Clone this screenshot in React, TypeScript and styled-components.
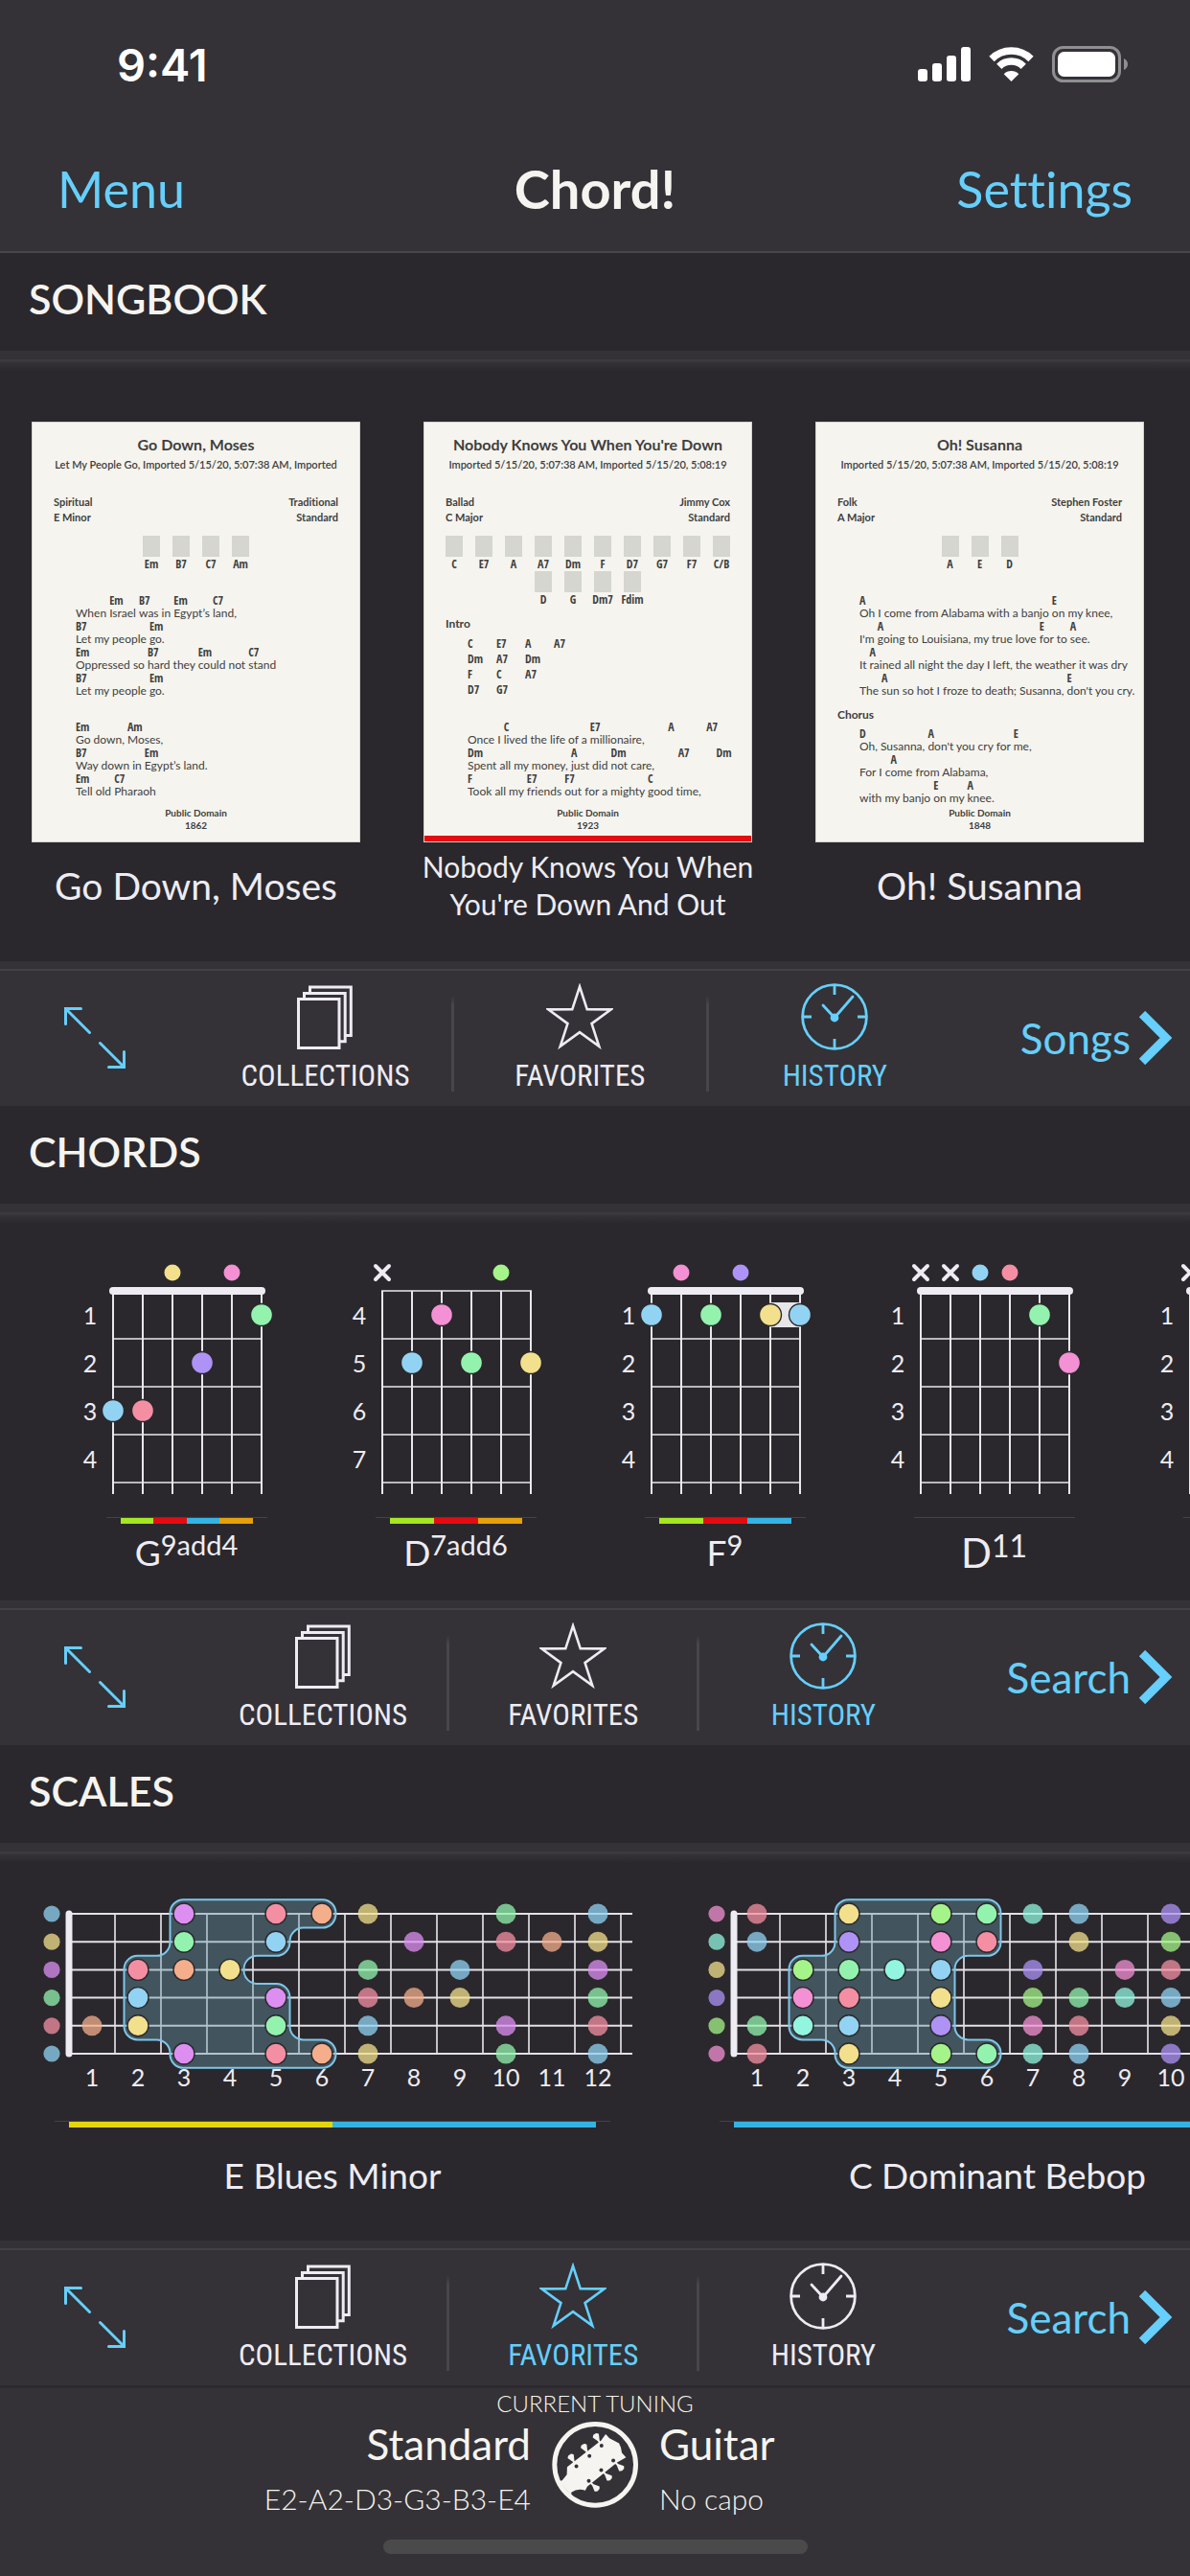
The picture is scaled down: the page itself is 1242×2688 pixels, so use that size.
import React from 'react';
import styled, { createGlobalStyle, css } from 'styled-components';

const color = {
  page: '#2a282c',
  bar: '#343236',
  band: '#353237',
  hairline: '#434146',
  divider: '#48464b',
  accent: '#66cffb',
  text: '#f6f4f0',
  soft: '#eeecf3',
  ink: '#40403e',
  paper: '#f5f4ee',
};

const note = {
  blue: '#92d3f3',
  yellow: '#f3e08d',
  magenta: '#dd8ff1',
  green: '#93f3ae',
  red: '#f48fa3',
  orange: '#f4ae8c',
  violet: '#ae92f5',
  pink: '#f490d4',
  lime: '#a5f48a',
  teal: '#92f5df',
} as const;
type NoteName = keyof typeof note;

const tag = { lime: '#a6e622', red: '#e50b10', blue: '#35b3e2', amber: '#e5a00b', yellow: '#e5d50c' };

const condensed = '"Roboto Condensed", Roboto, sans-serif';
const condensedBold = '"Open Sans Condensed", "Open Sans", sans-serif';

const GlobalStyle = createGlobalStyle`
  *, *::before, *::after { box-sizing: border-box; }
  body {
    margin: 0;
    background: ${color.bar};
    color: ${color.soft};
    font-family: Lato, sans-serif;
    font-variant-ligatures: no-common-ligatures;
    -webkit-font-smoothing: antialiased;
  }
  h1, h2, p, ul { margin: 0; padding: 0; }
  button { font: inherit; color: inherit; background: none; border: 0; padding: 0; cursor: pointer; }
  svg { display: block; }
`;

/* ---------- Page frame ---------- */

const Page = styled.div`
  display: flex;
  flex-direction: column;
  min-height: 100vh;
  overflow-x: hidden;
`;

const Header = styled.header`
  background: ${color.bar};
  border-bottom: 2px solid ${color.divider};
`;

const StatusBar = styled.div`
  display: flex;
  align-items: center;
  justify-content: space-between;
  height: 134px;
  padding: 0 65px 0 122px;
`;

const Clock = styled.time`
  font: 600 47px/1 Inter, sans-serif;
  color: #fff;
`;

const StatusIcons = styled.div`
  display: flex;
  align-items: center;
  gap: 19px;
`;

const NavBar = styled.nav`
  display: grid;
  grid-template-columns: 1fr auto 1fr;
  align-items: center;
  height: 128px;
  padding: 0 60px 2px;
`;

const NavButton = styled.button<{ $end?: boolean }>`
  justify-self: ${(p) => (p.$end ? 'end' : 'start')};
  font-size: 52px;
  line-height: 60px;
  color: ${color.accent};
`;

const AppTitle = styled.h1`
  font-size: 56px;
  line-height: 64px;
  font-weight: 700;
  color: ${color.text};
`;

/* ---------- Sections ---------- */

const Section = styled.section`
  background: ${color.page};
`;

const SectionTitle = styled.h2`
  height: 102px;
  padding-left: 30px;
  font-size: 43px;
  line-height: 96px;
  font-weight: 600;
  color: ${color.text};
`;

const TitleRule = styled.div`
  height: 23px;
  border-top: 9px solid ${color.band};
  background: linear-gradient(#3c3a3f 2px, ${color.bar} 3px, ${color.page} 12px);
`;

const Rail = styled.ul`
  display: flex;
  list-style: none;
  overflow: hidden;
`;

const SongRail = styled(Rail)`
  gap: 66px;
  padding: 51px 33px 34px;
`;

const ChordRail = styled(Rail)`
  padding: 24px 0 20px 54px;
`;

const ScaleRail = styled(Rail)`
  padding: 28px 0 18px;
`;

/* ---------- Song sheets ---------- */

const SongItem = styled.li`
  flex: 0 0 343px;
  min-width: 0;
`;

const Sheet = styled.article<{ $flagged?: boolean }>`
  display: flex;
  flex-direction: column;
  height: 439px;
  padding: 11px 22px 10px;
  border: 1px solid #d5d3cf;
  background: ${color.paper};
  color: ${color.ink};
  white-space: pre;
  ${(p) => p.$flagged && css`box-shadow: inset 0 -6px ${tag.red};`}
`;

const SheetTitle = styled.p`
  text-align: center;
  font-size: 16px;
  line-height: 23px;
  font-weight: 700;
`;

const SheetTags = styled.p`
  display: flex;
  justify-content: center;
  font-size: 11px;
  line-height: 20px;
  font-weight: 600;
  margin-bottom: 21px;
`;

const SheetMeta = styled.div`
  display: flex;
  justify-content: space-between;
  font-size: 11px;
  line-height: 16px;
  font-weight: 700;
`;

const ChipRows = styled.div`
  margin-top: 11px;
`;

const ChipRow = styled.div`
  display: flex;
  justify-content: center;
  gap: 13px;
`;

const Chip = styled.div`
  display: flex;
  flex-direction: column;
  align-items: center;
  width: 18px;
  font: 700 12px/15px ${condensedBold};

  &::before {
    content: '';
    width: 18px;
    height: 22px;
    background: #d6d6d1;
  }
`;

const Verse = styled.div<{ $tight?: boolean }>`
  margin-top: ${(p) => (p.$tight ? 0 : 24)}px;
  padding-left: 23px;
`;

const PartName = styled.p`
  margin: 10px 0 5px;
  font-size: 12px;
  line-height: 16px;
  font-weight: 700;
`;

const LyricLine = styled.div`
  display: flex;
`;

const Syllables = styled.span`
  display: flex;
  flex-direction: column;
  flex-shrink: 0;
  font-size: 12px;
  line-height: 14px;
`;

const LyricChord = styled.b`
  width: 0;
  height: 13px;
  font: 700 12px/13px ${condensedBold};
`;

const ChordGrid = styled.div`
  display: grid;
  grid-template-columns: repeat(4, 30px);
  padding-left: 23px;
  font: 700 12px/16px ${condensedBold};
`;

const GridCell = styled.span<{ $first: boolean }>`
  ${(p) => p.$first && css`grid-column-start: 1;`}
`;

const SheetFooter = styled.p`
  margin-top: auto;
  text-align: center;
  font-size: 10px;
  line-height: 13px;
  font-weight: 700;
`;

const SongName = styled.p<{ $small?: boolean }>`
  display: flex;
  align-items: center;
  justify-content: center;
  height: 90px;
  margin: 0 -10px;
  text-align: center;
  white-space: pre-line;
  font-size: ${(p) => (p.$small ? 30 : 39)}px;
  line-height: 39px;
`;

/* ---------- Chord and scale diagrams ---------- */

const ChordItem = styled.li`
  display: flex;
  flex-direction: column;
  align-items: center;
  flex: 0 0 281px;
`;

const ScaleItem = styled(ChordItem)`
  flex-basis: 694px;
`;

const TagTrack = styled.div<{ $wide?: boolean }>`
  display: flex;
  height: 7px;
  width: ${(p) => (p.$wide ? 580 : 168)}px;
  padding: 0 15px;
  border-top: 1px solid #444247;
`;

const TagBar = styled.span<{ $tint: string }>`
  flex: 1;
  background: ${(p) => p.$tint};
`;

const ChordName = styled.p<{ $large?: boolean }>`
  font-size: ${(p) => (p.$large ? 42 : 37)}px;
  line-height: 60px;

  sup {
    font-size: ${(p) => (p.$large ? 32 : 29)}px;
    line-height: 0;
    vertical-align: 11px;
  }
`;

const ScaleName = styled.p`
  font-size: 37px;
  line-height: 100px;
`;

const DiagramText = styled.text`
  fill: ${color.soft};
  font: 25px Lato, sans-serif;
  text-anchor: middle;
`;

/* ---------- Toolbar ---------- */

const Toolbar = styled.div`
  display: flex;
  height: 151px;
  border-top: 8px solid ${color.band};
  background: linear-gradient(${color.hairline} 2px, #343237 2px);
  color: ${color.soft};
`;

const ExpandButton = styled.button`
  flex: 0 0 208px;
  padding-left: 67px;
  color: ${color.accent};
`;

const Tab = styled.button<{ $active?: boolean }>`
  flex: 1;
  display: flex;
  flex-direction: column;
  align-items: center;
  gap: 6px;
  padding-top: 15px;
  font: 31px/42px ${condensed};
  color: ${(p) => (p.$active ? color.accent : color.soft)};
`;

const TabDivider = styled.span`
  align-self: center;
  flex: 0 0 3px;
  height: 100px;
  margin-top: 12px;
  background: linear-gradient(transparent, ${color.divider} 10%);
`;

const MoreButton = styled.button`
  display: flex;
  align-items: center;
  gap: 8px;
  padding: 0 18px 0 62px;
  font-size: 44px;
  line-height: 50px;
  color: ${color.accent};
`;

/* ---------- Tuning footer ---------- */

const Footer = styled.footer`
  flex: 1;
  display: flex;
  flex-direction: column;
  border-top: 3px solid #2b292d;
  background: ${color.bar};
  color: ${color.text};
`;

const FooterLabel = styled.p`
  text-align: center;
  font-size: 24px;
  line-height: 31px;
  font-weight: 300;
`;

const Tuning = styled.button`
  display: grid;
  grid-template-columns: 1fr 90px 1fr;
  column-gap: 22px;
  align-items: start;
  margin-top: 4px;
  text-align: left;
`;

const TuningText = styled.span<{ $end?: boolean }>`
  display: flex;
  flex-direction: column;
  gap: 16px;
  text-align: ${(p) => (p.$end ? 'right' : 'left')};
`;

const TuningMain = styled.span`
  font-size: 44px;
  line-height: 46px;
`;

const TuningSub = styled.span`
  font-size: 30px;
  line-height: 36px;
  font-weight: 300;
`;

const HomeIndicator = styled.div`
  align-self: center;
  width: 443px;
  height: 15px;
  margin: 25px 0 24px;
  border-radius: 8px;
  background: #4a4a4a;
`;

/* ---------- Icons ---------- */

const SignalIcon = () => (
  <svg width="55" height="36" viewBox="0 0 55 36" fill="#fff" aria-hidden="true">
    <rect x="0" y="23" width="10" height="13" rx="3" />
    <rect x="15" y="17" width="10" height="19" rx="3" />
    <rect x="30" y="9" width="10" height="27" rx="3" />
    <rect x="45" y="0" width="10" height="36" rx="3" />
  </svg>
);

const WifiIcon = () => (
  <svg width="47" height="36" viewBox="0 0 47 36" aria-hidden="true">
    <g fill="none" stroke="#fff" strokeWidth="7.5">
      <path d="M3 12.5A29 29 0 0 1 44 12.5" />
      <path d="M10.8 20.3A18 18 0 0 1 36.2 20.3" />
    </g>
    <path d="M23.5 36L15.7 28.2A11 11 0 0 1 31.3 28.2Z" fill="#fff" />
  </svg>
);

const BatteryIcon = () => (
  <svg width="79" height="38" viewBox="0 0 79 38" aria-hidden="true">
    <rect x="1.5" y="1.5" width="69" height="35" rx="10" fill="none" stroke="#8f8e91" strokeWidth="3" />
    <rect x="6" y="6" width="60" height="26" rx="6.5" fill="#fff" />
    <path d="M75 13Q79 15 79 19T75 25Z" fill="#8f8e91" />
  </svg>
);

const ExpandIcon = () => (
  <svg width="64" height="64" viewBox="0 0 64 64" fill="none" stroke="currentColor" strokeWidth="3" strokeLinecap="round" aria-hidden="true">
    <path d="M1.5 17.5V1.5H17.5M1.5 1.5L26.5 26.5M37.5 37.5L62.5 62.5M62.5 46.5V62.5H46.5" />
  </svg>
);

const CollectionsIcon = () => (
  <svg width="70" height="70" viewBox="0 0 70 70" fill="none" stroke="currentColor" strokeWidth="3" aria-hidden="true">
    <path d="M7.5 16.5H50V67.5H7.5Z" />
    <path d="M13.5 16V10.5H56.2V60.7H50" />
    <path d="M19.5 10V4H62.3V54.5H56" />
  </svg>
);

const starPoints = Array.from({ length: 10 }, (_, i) => {
  const r = i % 2 ? 13.2 : 34.5;
  const a = (i * Math.PI) / 5;
  return `${(35 + r * Math.sin(a)).toFixed(2)},${(38 - r * Math.cos(a)).toFixed(2)}`;
}).join(' ');

const StarIcon = () => (
  <svg width="70" height="70" viewBox="0 0 70 70" fill="none" stroke="currentColor" strokeWidth="2.6" aria-hidden="true">
    <polygon points={starPoints} />
  </svg>
);

const HistoryIcon = () => (
  <svg width="70" height="70" viewBox="0 0 70 70" fill="none" stroke="currentColor" strokeWidth="2.8" aria-hidden="true">
    <circle cx="35" cy="35" r="33.4" />
    <path d="M35 2V12M35 58V68M2 35H11M59 35H68" />
    <path d="M35 36L54 14M35 36L23 23" strokeLinecap="round" />
    <circle cx="35" cy="36" r="4.4" fill="currentColor" stroke="none" />
  </svg>
);

const ChevronIcon = () => (
  <svg width="36" height="56" viewBox="0 0 36 56" fill="none" stroke="currentColor" strokeWidth="9" aria-hidden="true">
    <path d="M4 3L29 28L4 53" />
  </svg>
);

const pegs = [
  { x: 184, y: 278, turn: -30 },
  { x: 225, y: 246, turn: -30 },
  { x: 263, y: 213, turn: -30 },
  { x: 223, y: 324, turn: 134 },
  { x: 262, y: 290, turn: 134 },
  { x: 300, y: 260, turn: 134 },
];

const GuitarIcon = () => (
  <svg width="90" height="90" viewBox="107 138 271 271" aria-hidden="true">
    <g fill={color.text}>
      <path d="M130 326L140 322L154 304L155 280L262 197L276 177L288 190L318 206Q326 220 327 236L340 250L312 266L218 342L212 354Q188 346 168 360L168 370Z" />
      {pegs.map((p) => (
        <path key={`${p.x}`} transform={`translate(${p.x} ${p.y}) rotate(${p.turn})`} d="M-3 0L-3 -18L-11 -36Q-6 -44 0 -42Q6 -44 11 -36L3 -18L3 0Z" />
      ))}
    </g>
    {pegs.map((p) => (
      <circle key={`${p.x}`} cx={p.x} cy={p.y} r="6" fill={color.bar} />
    ))}
    <circle cx="243" cy="273" r="127.5" fill="none" stroke={color.text} strokeWidth="15" />
  </svg>
);

/* ---------- Data ---------- */

type Lyric = [chord: string, words: string][];
type Part =
  | { kind: 'verse'; name?: string; lines: Lyric[] }
  | { kind: 'grid'; name: string; rows: string[][] };

interface Song {
  name: string;
  title: string;
  tags: string;
  meta: [string, string, string, string];
  chips: string[][];
  parts: Part[];
  year: string;
  flagged?: boolean;
}

/* Chords that fall after the last word are spaced out with hard spaces. */
const rest = '\u00a0'.repeat(13);
const pause = '\u00a0'.repeat(8);

const songs: Song[] = [
  {
    name: 'Go Down, Moses',
    title: 'Go Down, Moses',
    tags: 'Let My People Go, Imported 5/15/20, 5:07:38 AM, Imported',
    meta: ['Spiritual', 'Traditional', 'E Minor', 'Standard'],
    chips: [['Em', 'B7', 'C7', 'Am']],
    parts: [
      {
        kind: 'verse',
        lines: [
          [['', 'When '], ['Em', 'Israel '], ['B7', 'was in '], ['Em', 'Egypt’s '], ['C7', 'land,']],
          [['B7', 'Let my people '], ['Em', 'go.']],
          [['Em', 'Oppressed so '], ['B7', 'hard they '], ['Em', 'could not '], ['C7', 'stand']],
          [['B7', 'Let my people '], ['Em', 'go.']],
        ],
      },
      {
        kind: 'verse',
        lines: [
          [['Em', 'Go down, '], ['Am', 'Moses,']],
          [['B7', 'Way down in '], ['Em', 'Egypt’s land.']],
          [['Em', 'Tell old '], ['C7', 'Pharaoh']],
        ],
      },
    ],
    year: '1862',
  },
  {
    name: "Nobody Knows You When\nYou're Down And Out",
    title: "Nobody Knows You When You're Down",
    tags: 'Imported 5/15/20, 5:07:38 AM, Imported 5/15/20, 5:08:19',
    meta: ['Ballad', 'Jimmy Cox', 'C Major', 'Standard'],
    chips: [
      ['C', 'E7', 'A', 'A7', 'Dm', 'F', 'D7', 'G7', 'F7', 'C/B'],
      ['D', 'G', 'Dm7', 'Fdim'],
    ],
    parts: [
      { kind: 'grid', name: 'Intro', rows: [['C', 'E7', 'A', 'A7'], ['Dm', 'A7', 'Dm'], ['F', 'C', 'A7'], ['D7', 'G7']] },
      {
        kind: 'verse',
        lines: [
          [['', 'Once I '], ['C', 'lived the life of a '], ['E7', `millionaire,${pause}`], ['A', rest], ['A7', '']],
          [['Dm', 'Spent all my money, '], ['A', 'just did '], ['Dm', `not care,${pause}`], ['A7', rest], ['Dm', '']],
          [['F', 'Took all my '], ['E7', 'friends '], ['F7', 'out for a mighty '], ['C', 'good time,']],
        ],
      },
    ],
    year: '1923',
    flagged: true,
  },
  {
    name: 'Oh! Susanna',
    title: 'Oh! Susanna',
    tags: 'Imported 5/15/20, 5:07:38 AM, Imported 5/15/20, 5:08:19',
    meta: ['Folk', 'Stephen Foster', 'A Major', 'Standard'],
    chips: [['A', 'E', 'D']],
    parts: [
      {
        kind: 'verse',
        lines: [
          [['A', 'Oh I come from Alabama with a banjo '], ['E', 'on my knee,']],
          [['', "I'm "], ['A', 'going to Louisiana, my true love '], ['E', 'for to '], ['A', 'see.']],
          [['', 'It '], ['A', 'rained all night the day I left, the weather it was dry']],
          [['', 'The '], ['A', 'sun so hot I froze to death; Susanna, '], ['E', "don't you cry."]],
        ],
      },
      {
        kind: 'verse',
        name: 'Chorus',
        lines: [
          [['D', 'Oh, Susanna, '], ['A', "don't you cry for "], ['E', 'me,']],
          [['', 'For I c'], ['A', 'ome from Alabama,']],
          [['', 'with my banjo '], ['E', 'on my '], ['A', 'knee.']],
        ],
      },
    ],
    year: '1848',
  },
];

interface Chord {
  root: string;
  ext: string;
  large?: boolean;
  from: number;
  muted?: number[];
  open: [number, NoteName][];
  dots: [string: number, fret: number, tint: NoteName][];
  barre?: [number, number, number];
  tags: string[];
}

const chords: Chord[] = [
  {
    root: 'G', ext: '9add4', from: 1,
    open: [[2, 'yellow'], [4, 'pink']],
    dots: [[5, 1, 'green'], [3, 2, 'violet'], [0, 3, 'blue'], [1, 3, 'red']],
    tags: [tag.lime, tag.red, tag.blue, tag.amber],
  },
  {
    root: 'D', ext: '7add6', from: 4, muted: [0],
    open: [[4, 'lime']],
    dots: [[2, 1, 'pink'], [1, 2, 'blue'], [3, 2, 'green'], [5, 2, 'yellow']],
    tags: [tag.lime, tag.red, tag.amber],
  },
  {
    root: 'F', ext: '9', from: 1,
    open: [[1, 'pink'], [3, 'violet']],
    dots: [[0, 1, 'blue'], [2, 1, 'green'], [4, 1, 'yellow'], [5, 1, 'blue']],
    barre: [4, 5, 1],
    tags: [tag.lime, tag.red, tag.blue],
  },
  {
    root: 'D', ext: '11', large: true, from: 1, muted: [0, 1],
    open: [[2, 'blue'], [3, 'red']],
    dots: [[4, 1, 'green'], [5, 2, 'pink']],
    tags: [],
  },
  { root: '', ext: '', from: 1, muted: [0], open: [], dots: [], tags: [] },
];

type Mark = [fret: number, tint: NoteName];
interface Scale {
  name: string;
  lastFret: number;
  strings: { open: NoteName; marks: Mark[] }[];
  region: [number, number][];
  tags: string[];
}

const scales: Scale[] = [
  {
    name: 'E Blues Minor',
    lastFret: 12,
    strings: [
      { open: 'blue', marks: [[3, 'magenta'], [5, 'red'], [6, 'orange'], [7, 'yellow'], [10, 'green'], [12, 'blue']] },
      { open: 'yellow', marks: [[3, 'green'], [5, 'blue'], [8, 'magenta'], [10, 'red'], [11, 'orange'], [12, 'yellow']] },
      { open: 'magenta', marks: [[2, 'red'], [3, 'orange'], [4, 'yellow'], [7, 'green'], [9, 'blue'], [12, 'magenta']] },
      { open: 'green', marks: [[2, 'blue'], [5, 'magenta'], [7, 'red'], [8, 'orange'], [9, 'yellow'], [12, 'green']] },
      { open: 'red', marks: [[1, 'orange'], [2, 'yellow'], [5, 'green'], [7, 'blue'], [10, 'magenta'], [12, 'red']] },
      { open: 'blue', marks: [[3, 'magenta'], [5, 'red'], [6, 'orange'], [7, 'yellow'], [10, 'green'], [12, 'blue']] },
    ],
    region: [[3, 6], [3, 5], [2, 4], [2, 5], [2, 5], [3, 6]],
    tags: [tag.yellow, tag.blue],
  },
  {
    name: 'C Dominant Bebop',
    lastFret: 10,
    strings: [
      { open: 'pink', marks: [[1, 'red'], [3, 'yellow'], [5, 'lime'], [6, 'green'], [7, 'teal'], [8, 'blue'], [10, 'violet']] },
      { open: 'teal', marks: [[1, 'blue'], [3, 'violet'], [5, 'pink'], [6, 'red'], [8, 'yellow'], [10, 'lime']] },
      { open: 'yellow', marks: [[2, 'lime'], [3, 'green'], [4, 'teal'], [5, 'blue'], [7, 'violet'], [9, 'pink'], [10, 'red']] },
      { open: 'violet', marks: [[2, 'pink'], [3, 'red'], [5, 'yellow'], [7, 'lime'], [8, 'green'], [9, 'teal'], [10, 'blue']] },
      { open: 'lime', marks: [[1, 'green'], [2, 'teal'], [3, 'blue'], [5, 'violet'], [7, 'pink'], [8, 'red'], [10, 'yellow']] },
      { open: 'pink', marks: [[1, 'red'], [3, 'yellow'], [5, 'lime'], [6, 'green'], [7, 'teal'], [8, 'blue'], [10, 'violet']] },
    ],
    region: [[3, 6], [3, 6], [2, 5], [2, 5], [2, 5], [3, 6]],
    tags: [tag.blue],
  },
];

/* ---------- Diagram drawing ---------- */

const stringX = (i: number) => 64 + i * 31;
const chordFretY = (f: number) => 44 + f * 50;

const ChordDiagram = ({ chord }: { chord: Chord }) => (
  <svg width="281" height="280" viewBox="0 0 281 280" role="img" aria-label={`${chord.root}${chord.ext} chord diagram`}>
    <g stroke="#b9b8bd" strokeWidth="2">
      {[0, 1, 2, 3, 4].map((f) => <line key={f} x1={63} x2={220} y1={chordFretY(f)} y2={chordFretY(f)} />)}
    </g>
    <g stroke="#e9e7ee" strokeWidth="2">
      {[0, 1, 2, 3, 4, 5].map((s) => <line key={s} x1={stringX(s)} x2={stringX(s)} y1={44} y2={256} />)}
    </g>
    {chord.from === 1 && <line x1={64} x2={219} y1={44} y2={44} stroke={color.soft} strokeWidth="8" strokeLinecap="round" />}
    {[0, 1, 2, 3].map((n) => <DiagramText key={n} x={40} y={79 + n * 50}>{chord.from + n}</DiagramText>)}
    {chord.muted?.map((s) => (
      <path key={s} d={`M${stringX(s) - 7} 18l14 14m0 -14l-14 14`} stroke={color.soft} strokeWidth="4" strokeLinecap="round" />
    ))}
    {chord.open.map(([s, tint]) => <circle key={s} cx={stringX(s)} cy={25} r="8.5" fill={note[tint]} />)}
    {chord.barre && (
      <rect x={stringX(chord.barre[0])} y={chordFretY(chord.barre[2]) - 38} width={31 * (chord.barre[1] - chord.barre[0])} height="26" fill="#e6e5e8" />
    )}
    {chord.dots.map(([s, f, tint]) => (
      <circle key={`${s}-${f}`} cx={stringX(s)} cy={chordFretY(f) - 25} r="11.5" fill={note[tint]} stroke={color.page} strokeWidth="1.4" />
    ))}
  </svg>
);

const fretX = (f: number) => 72 + f * 48;
const markX = (f: number) => fretX(f) - 24;
const rowY = (s: number) => 23 + (s * 146) / 5;

/* Outline that hugs the highlighted frets of every string, with rounded corners. */
const regionPath = (region: [number, number][]) => {
  const edge = (i: number) => (i === 0 ? rowY(0) - 14.8 : i === 6 ? rowY(5) + 14.8 : (rowY(i - 1) + rowY(i)) / 2);
  const pts: [number, number][] = [];
  const add = (x: number, y: number) => pts.push([x, y]);
  region.forEach(([, r], i) => {
    if (i === 0 || region[i - 1][1] !== r) add(markX(r) + 14.5, edge(i));
    if (i === 5 || region[i + 1][1] !== r) add(markX(r) + 14.5, edge(i + 1));
  });
  for (let i = 5; i >= 0; i--) {
    const l = region[i][0];
    if (i === 5 || region[i + 1][0] !== l) add(markX(l) - 14.5, edge(i + 1));
    if (i === 0 || region[i - 1][0] !== l) add(markX(l) - 14.5, edge(i));
  }
  const n = pts.length;
  const toward = (a: [number, number], b: [number, number]) => {
    const d = Math.hypot(b[0] - a[0], b[1] - a[1]);
    const k = Math.min(14, d / 2) / d;
    return [a[0] + (b[0] - a[0]) * k, a[1] + (b[1] - a[1]) * k];
  };
  const arc = 0.45;
  const xy = (q: number[]) => `${q[0].toFixed(1)} ${q[1].toFixed(1)}`;
  return (
    pts
      .map((p, i) => {
        const start = toward(p, pts[(i + n - 1) % n]);
        const end = toward(p, pts[(i + 1) % n]);
        const pull = (q: number[]) => xy([p[0] + (q[0] - p[0]) * arc, p[1] + (q[1] - p[1]) * arc]);
        return `${i ? 'L' : 'M'}${xy(start)}C${pull(start)} ${pull(end)} ${xy(end)}`;
      })
      .join('') + 'Z'
  );
};

const ScaleDiagram = ({ scale }: { scale: Scale }) => {
  const bright = (s: number, f: number) => f >= scale.region[s][0] && f <= scale.region[s][1];
  return (
    <svg width="694" height="239" viewBox="0 0 694 239" role="img" aria-label={`${scale.name} scale diagram`}>
      <g stroke="#c2c1c6" strokeWidth="2">
        {Array.from({ length: 12 }, (_, i) => <line key={i} x1={fretX(i + 1)} x2={fretX(i + 1)} y1={rowY(0)} y2={rowY(5)} />)}
      </g>
      <g stroke="#e3e1e8" strokeWidth="2">
        {scale.strings.map((_, s) => <line key={s} x1={72} x2={660} y1={rowY(s)} y2={rowY(s)} />)}
      </g>
      <line x1={72} x2={72} y1={rowY(0)} y2={rowY(5)} stroke={color.soft} strokeWidth="7" strokeLinecap="round" />
      <path d={regionPath(scale.region)} fill="rgba(102, 150, 168, 0.4)" stroke="#7fc6ea" strokeWidth="2" />
      {scale.strings.map((row, s) => (
        <g key={s}>
          <circle cx={54} cy={rowY(s)} r="8.6" fill={note[row.open]} opacity="0.75" />
          {row.marks.map(([f, tint]) =>
            bright(s, f) ? (
              <circle key={f} cx={markX(f)} cy={rowY(s)} r="11" fill={note[tint]} stroke={color.page} strokeWidth="1.4" />
            ) : (
              <circle key={f} cx={markX(f)} cy={rowY(s)} r="10.5" fill={note[tint]} opacity="0.75" />
            ),
          )}
        </g>
      ))}
      {Array.from({ length: scale.lastFret }, (_, i) => <DiagramText key={i} x={markX(i + 1)} y={203}>{i + 1}</DiagramText>)}
    </svg>
  );
};

/* ---------- Composed parts ---------- */

const SongSheet = ({ song }: { song: Song }) => (
  <Sheet $flagged={song.flagged}>
    <SheetTitle>{song.title}</SheetTitle>
    <SheetTags>{song.tags}</SheetTags>
    <SheetMeta><span>{song.meta[0]}</span><span>{song.meta[1]}</span></SheetMeta>
    <SheetMeta><span>{song.meta[2]}</span><span>{song.meta[3]}</span></SheetMeta>
    <ChipRows>
      {song.chips.map((row, i) => (
        <ChipRow key={i}>{row.map((c) => <Chip key={c}>{c}</Chip>)}</ChipRow>
      ))}
    </ChipRows>
    {song.parts.map((part, i) => (
      <React.Fragment key={i}>
        {part.name && <PartName>{part.name}</PartName>}
        {part.kind === 'grid' ? (
          <ChordGrid>
            {part.rows.map((row, r) => row.map((c, k) => <GridCell key={`${r}-${k}`} $first={k === 0}>{c}</GridCell>))}
          </ChordGrid>
        ) : (
          <Verse $tight={Boolean(part.name)}>
            {part.lines.map((line, l) => (
              <LyricLine key={l}>
                {line.map(([chord, words], k) => (
                  <Syllables key={k}><LyricChord>{chord}</LyricChord>{words}</Syllables>
                ))}
              </LyricLine>
            ))}
          </Verse>
        )}
      </React.Fragment>
    ))}
    <SheetFooter>{`Public Domain\n${song.year}`}</SheetFooter>
  </Sheet>
);

type TabName = 'collections' | 'favorites' | 'history';

const SectionToolbar = ({ active, more }: { active: TabName; more: string }) => (
  <Toolbar>
    <ExpandButton aria-label="Expand"><ExpandIcon /></ExpandButton>
    <Tab $active={active === 'collections'}><CollectionsIcon />COLLECTIONS</Tab>
    <TabDivider />
    <Tab $active={active === 'favorites'}><StarIcon />FAVORITES</Tab>
    <TabDivider />
    <Tab $active={active === 'history'}><HistoryIcon />HISTORY</Tab>
    <MoreButton>{more}<ChevronIcon /></MoreButton>
  </Toolbar>
);

export default function App() {
  return (
    <Page>
      <GlobalStyle />
      <Header>
        <StatusBar>
          <Clock>9:41</Clock>
          <StatusIcons><SignalIcon /><WifiIcon /><BatteryIcon /></StatusIcons>
        </StatusBar>
        <NavBar>
          <NavButton>Menu</NavButton>
          <AppTitle>Chord!</AppTitle>
          <NavButton $end>Settings</NavButton>
        </NavBar>
      </Header>

      <Section>
        <SectionTitle>SONGBOOK</SectionTitle>
        <TitleRule />
        <SongRail>
          {songs.map((song) => (
            <SongItem key={song.title}>
              <SongSheet song={song} />
              <SongName $small={song.flagged}>{song.name}</SongName>
            </SongItem>
          ))}
        </SongRail>
        <SectionToolbar active="history" more="Songs" />
      </Section>

      <Section>
        <SectionTitle>CHORDS</SectionTitle>
        <TitleRule />
        <ChordRail>
          {chords.map((chord, i) => (
            <ChordItem key={i}>
              <ChordDiagram chord={chord} />
              <TagTrack>{chord.tags.map((t) => <TagBar key={t} $tint={t} />)}</TagTrack>
              <ChordName $large={chord.large}>{chord.root}<sup>{chord.ext}</sup></ChordName>
            </ChordItem>
          ))}
        </ChordRail>
        <SectionToolbar active="history" more="Search" />
      </Section>

      <Section>
        <SectionTitle>SCALES</SectionTitle>
        <TitleRule />
        <ScaleRail>
          {scales.map((scale) => (
            <ScaleItem key={scale.name}>
              <ScaleDiagram scale={scale} />
              <TagTrack $wide>{scale.tags.map((t) => <TagBar key={t} $tint={t} />)}</TagTrack>
              <ScaleName>{scale.name}</ScaleName>
            </ScaleItem>
          ))}
        </ScaleRail>
        <SectionToolbar active="favorites" more="Search" />
      </Section>

      <Footer>
        <FooterLabel>CURRENT TUNING</FooterLabel>
        <Tuning>
          <TuningText $end>
            <TuningMain>Standard</TuningMain>
            <TuningSub>E2-A2-D3-G3-B3-E4</TuningSub>
          </TuningText>
          <GuitarIcon />
          <TuningText>
            <TuningMain>Guitar</TuningMain>
            <TuningSub>No capo</TuningSub>
          </TuningText>
        </Tuning>
        <HomeIndicator />
      </Footer>
    </Page>
  );
}
